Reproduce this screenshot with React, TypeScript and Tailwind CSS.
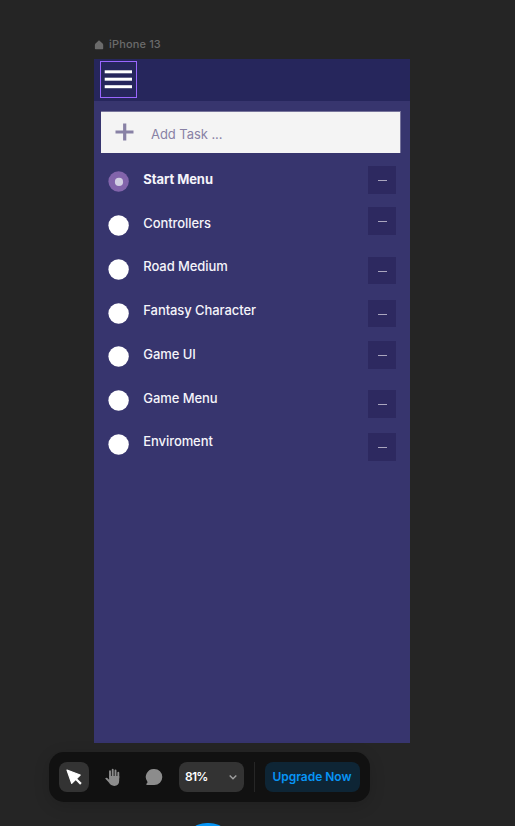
const tasks = [
  { name: 'Start Menu', button: 'mt-[6px] h-7', label: 'mt-[9px]', dash: '' },
  { name: 'Controllers', button: 'mt-[3.2px] h-7', label: 'mt-[9.2px]', dash: 'mt-[2px]' },
  { name: 'Road Medium', button: 'mt-[9.4px] h-[27px]', label: 'mt-[8.4px]', dash: 'mt-[2px]' },
  { name: 'Fantasy Character', button: 'mt-[8.6px] h-[27px]', label: 'mt-[8.6px]', dash: 'mt-[2px]' },
  { name: 'Game UI', button: 'mt-[5.8px] h-7', label: 'mt-[8.8px]', dash: 'mt-[2px]' },
  { name: 'Game Menu', button: 'mt-[11px] h-7', label: 'mt-[9px]', dash: 'mt-[2px]' },
  { name: 'Enviroment', button: 'mt-[10.2px] h-7', label: 'mt-[8.2px]', dash: 'mt-[2px]' },
];

function FrameLabel() {
  return (
    <div className="flex h-[59px] items-start pl-[94px] pt-[37px] text-[#6b6b6b]">
      <svg width="10" height="10" viewBox="0 0 10 10" className="mt-[3px]" fill="currentColor">
        <path d="M5 .3 8.6 3.6Q9.2 4.2 9.2 5v3.6q0 .7-.7.7H1.6q-.7 0-.7-.7V5q0-.8.6-1.4Z" />
      </svg>
      <span className="ml-[5px] text-[11px] font-medium leading-[15px] tracking-[0.15px]">iPhone 13</span>
    </div>
  );
}

function Header() {
  return (
    <header className="h-[42px] bg-[#26265c] pl-[6px] pt-[2px]">
      <div className="h-[37px] w-[37px] border border-[#9a66ff]">
        <svg width="35" height="35" viewBox="0 0 35 35" fill="#fff">
          <rect x="3.7" y="8.3" width="27.3" height="3" />
          <rect x="3.7" y="15.7" width="27.3" height="3" />
          <rect x="3.7" y="23.2" width="27.3" height="3" />
        </svg>
      </div>
    </header>
  );
}

function TaskRow({ task, selected }: { task: (typeof tasks)[number]; selected: boolean }) {
  return (
    <li className="flex h-[43.8px] items-start pl-[14px] pr-[14px]">
      <svg width="21" height="21" viewBox="0 0 21 21" className="mt-[11.3px] shrink-0">
        <circle cx="10.6" cy="10.5" r="10.2" fill={selected ? '#8264ab' : '#fff'} />
        {selected && <circle cx="11" cy="10.9" r="4.1" fill="#d2cfe3" />}
      </svg>
      <span
        className={`ml-[14.3px] text-[13px] leading-5 text-[#f5f4fa] ${selected ? 'font-bold tracking-[-0.07px]' : 'font-medium tracking-[-0.08px]'} ${task.label}`}
      >
        {task.name}
      </span>
      <button className={`ml-auto flex w-7 shrink-0 items-center justify-center bg-[#2d2960] ${task.button}`}>
        <span className={`ml-px h-px w-[9px] bg-[#aaa6be] ${task.dash}`} />
      </button>
    </li>
  );
}

function Toolbar() {
  return (
    <nav className="ml-[48.5px] mt-[9px] flex h-[50px] w-[321px] items-center rounded-[15px] bg-[#111] pl-[10px] shadow-[0_4px_16px_rgba(0,0,0,0.15)]">
      <div className="flex h-[30px] w-[30px] items-center justify-center rounded-lg bg-[#333]">
        <svg width="16" height="16" viewBox="0 0 16 16">
          <path d="M1 1 14.2 6 5.7 14.4Z" fill="#fff" stroke="#fff" strokeWidth="1.2" strokeLinejoin="round" />
          <path d="m9.5 9.5 5.4 5.4" stroke="#fff" strokeWidth="2.2" />
        </svg>
      </div>
      <svg width="18" height="19" viewBox="0 0 18 19" className="ml-[15px]" fill="none" stroke="#8c8c8c" strokeLinecap="round">
        <path d="M6 9V3.3M8.7 9V1.8M11.5 9V2.4M14.3 10V4.7" strokeWidth="1.9" />
        <path d="M5.1 8H15.2v4.5q0 5.4-5 5.4-3.4 0-5.3-3.3L1.2 10.6q.7-1.2 2.1-.5l1.8 1.7Z" fill="#8c8c8c" stroke="none" />
      </svg>
      <svg width="18" height="18" viewBox="0 0 18 18" className="ml-[23px]" fill="#8c8c8c">
        <path d="M9.3 1a8 8 0 1 1 0 16H1.7q-.8-.8 0-1.4.7-.7.8-1.7A8 8 0 0 1 9.3 1Z" />
      </svg>
      <div className="ml-[16px] flex h-[30px] w-[65px] items-center justify-between rounded-lg bg-[#333] pl-[6.5px] pr-[6px]">
        <span className="text-xs font-semibold tracking-[-0.7px] text-white">81%</span>
        <svg width="10" height="10" viewBox="0 0 10 10" fill="none" stroke="#a0a0a0" strokeWidth="1.4">
          <path d="m1.7 3.5 3.3 3.2 3.3-3.2" />
        </svg>
      </div>
      <div className="ml-[10px] h-[30px] w-px bg-[#262626]" />
      <button className="ml-[10px] h-[30px] w-[95px] whitespace-nowrap rounded-lg bg-[#0e2535] text-xs font-semibold tracking-[-0.03px] text-[#0794f5]">
        Upgrade Now
      </button>
    </nav>
  );
}

export default function App() {
  return (
    <div className="h-[826px] w-[515px] overflow-hidden bg-[#252525] font-['Inter',sans-serif]">
      <FrameLabel />
      <main className="ml-[94px] h-[684px] w-[316px] bg-[#37356e]">
        <Header />
        <div className="ml-[7px] mt-[10px] flex h-[42px] w-[300px] items-center border-r border-t border-[#77749b] bg-[#f4f4f4]">
          <svg width="19" height="18" viewBox="0 0 19 18" className="-mt-[2px] ml-[14px]" stroke="#8881a5" strokeWidth="3.2">
            <path d="M.5 9h18M9.7 .5v17" />
          </svg>
          <span className="ml-[17px] mt-[3px] text-[13px] leading-5 tracking-[-0.06px] text-[#8881a5]">Add Task ...</span>
        </div>
        <ul className="pt-[7px]">
          {tasks.map((task, i) => (
            <TaskRow key={task.name} task={task} selected={i === 0} />
          ))}
        </ul>
      </main>
      <Toolbar />
      <div className="ml-[183px] mt-[21px] h-12 w-[50px] rounded-full bg-[#0696f7]" />
    </div>
  );
}
